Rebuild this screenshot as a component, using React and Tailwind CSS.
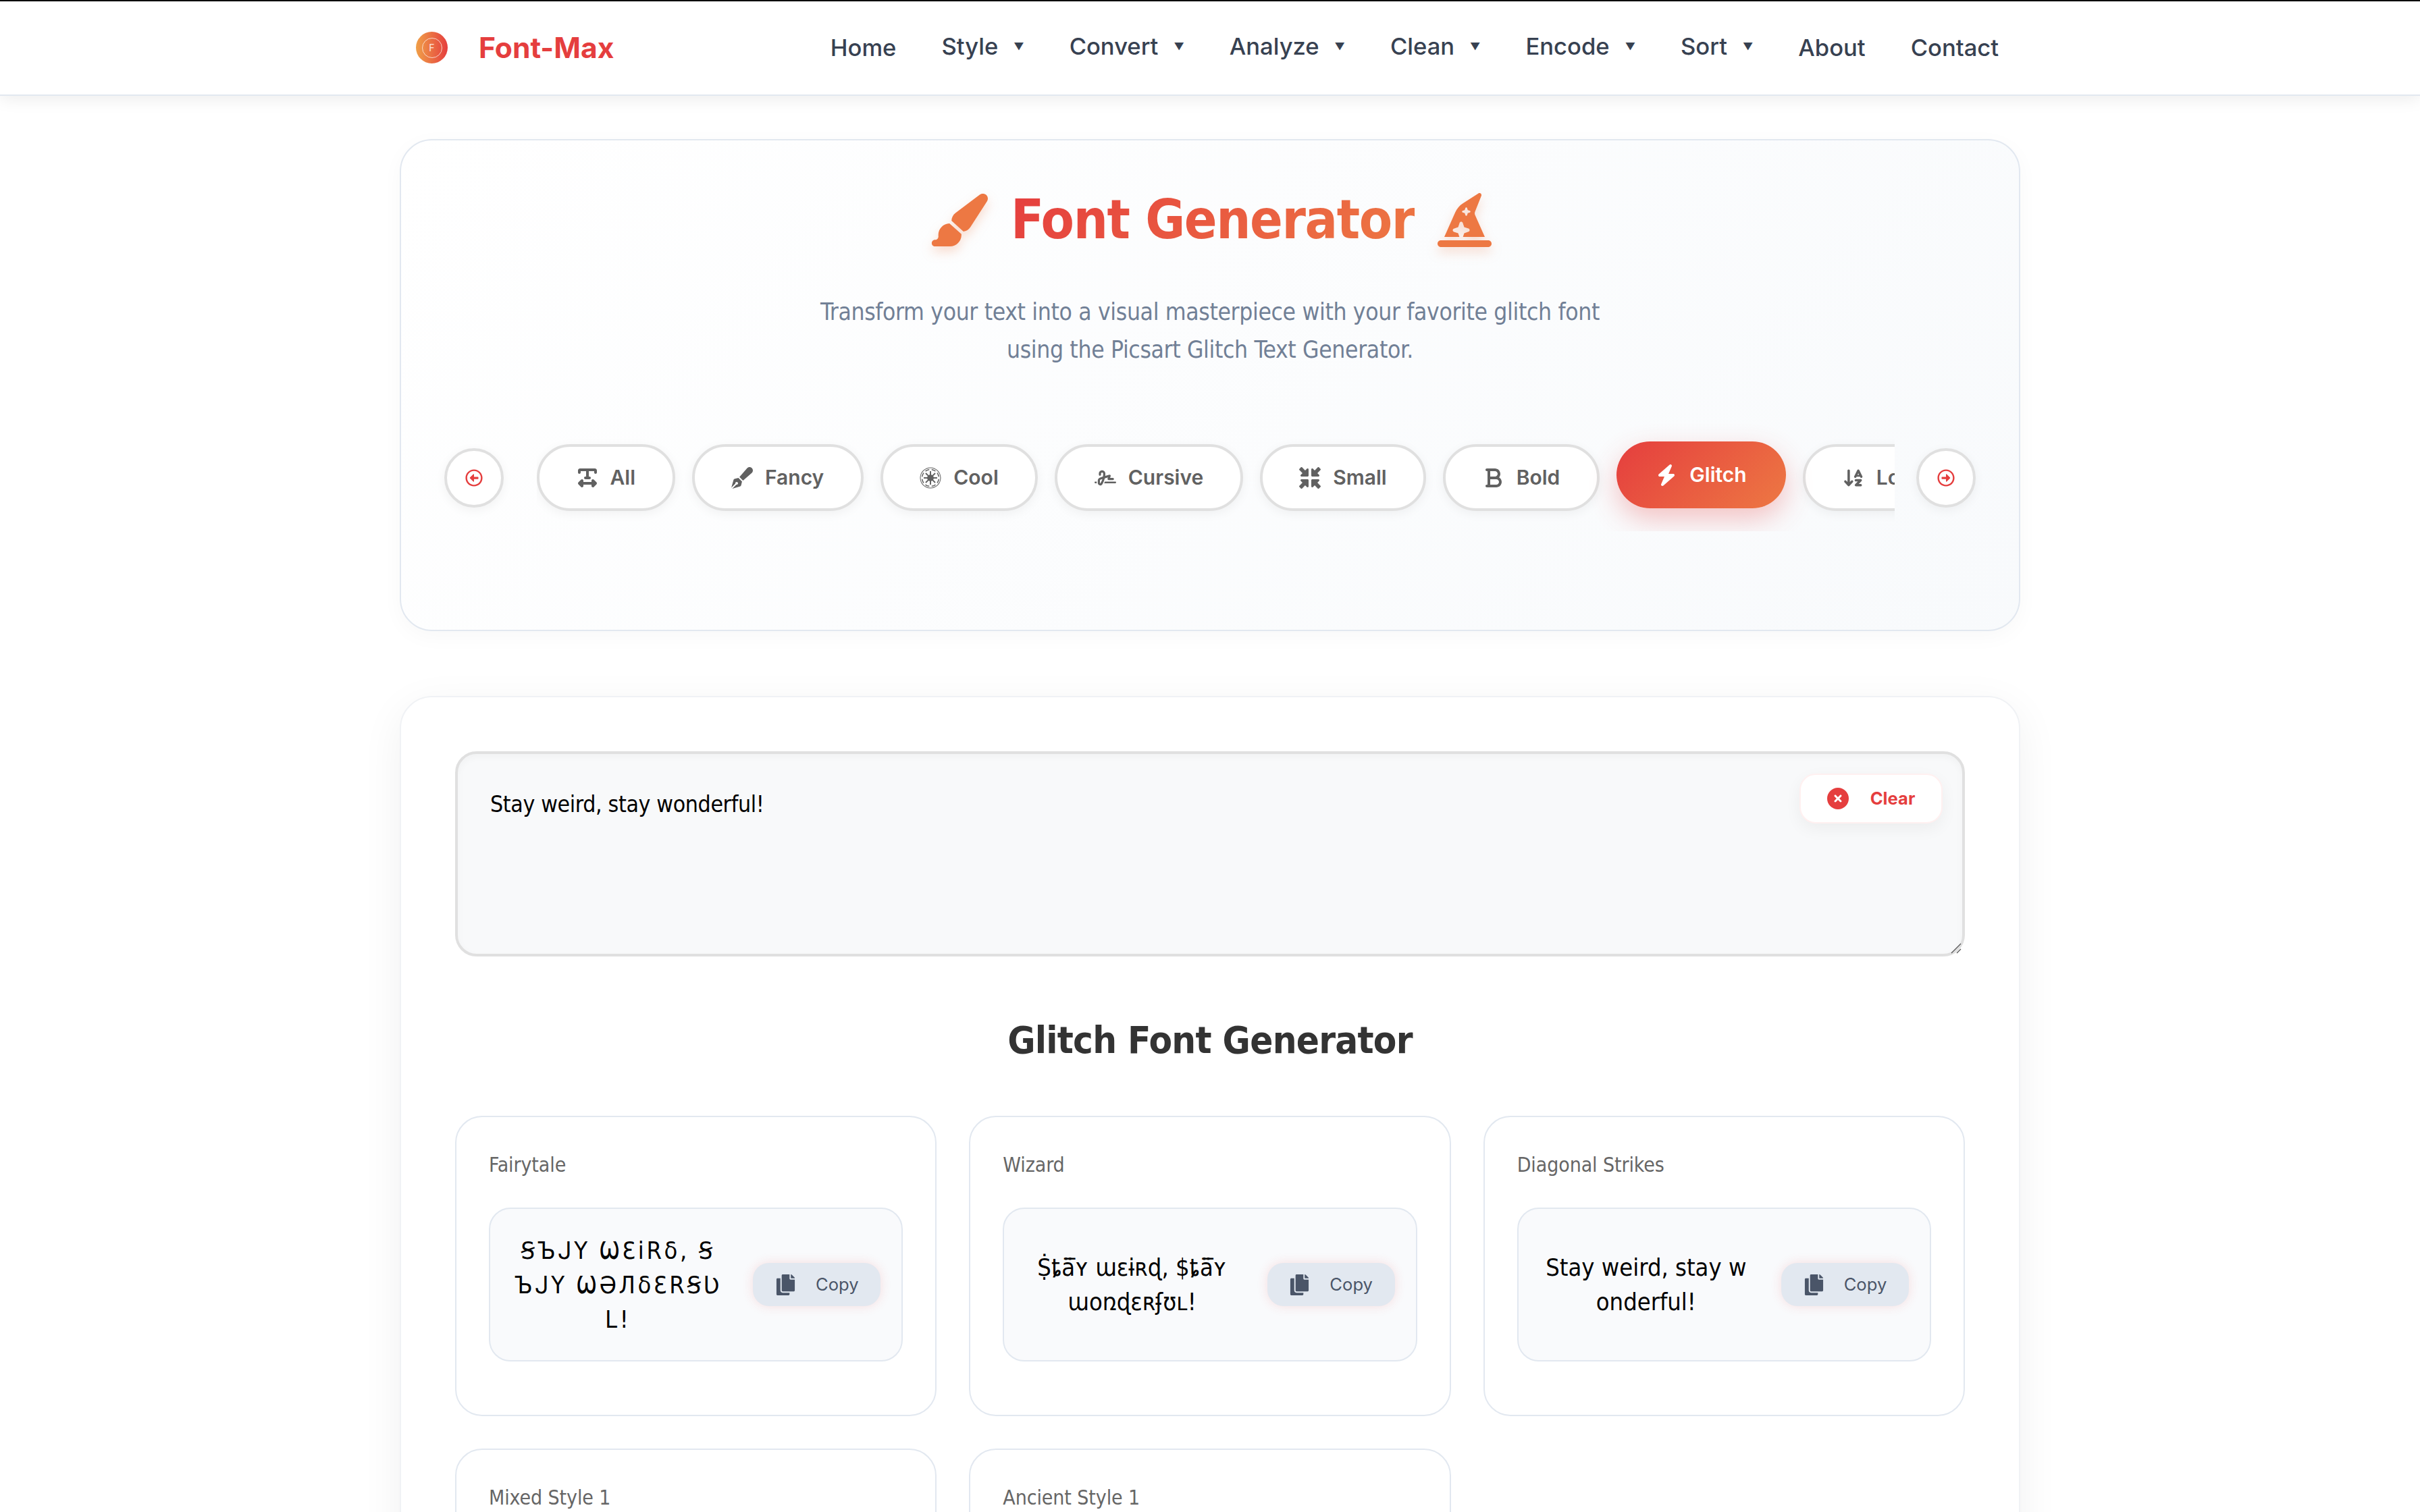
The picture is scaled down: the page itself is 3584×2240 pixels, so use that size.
import React from 'react';
import { FaGalacticRepublic, FaRegArrowAltCircleLeft, FaRegArrowAltCircleRight, FaCopy } from 'react-icons/fa';
import {
  FaPaintbrush, FaHatWizard, FaTextWidth, FaPenFancy, FaSignature, FaMinimize, FaBold, FaBolt,
  FaArrowDownAZ, FaCircleXmark,
} from 'react-icons/fa6';

const tahoma = "font-['DejaVu_Sans',sans-serif] [font-stretch:condensed]";
const inter = "font-['Inter',sans-serif]";

const navItems = [
  { label: 'Home' },
  { label: 'Style', menu: true },
  { label: 'Convert', menu: true },
  { label: 'Analyze', menu: true },
  { label: 'Clean', menu: true },
  { label: 'Encode', menu: true },
  { label: 'Sort', menu: true },
  { label: 'About' },
  { label: 'Contact' },
];

const tabs = [
  { label: 'All', icon: FaTextWidth },
  { label: 'Fancy', icon: FaPenFancy },
  { label: 'Cool', icon: FaGalacticRepublic },
  { label: 'Cursive', icon: FaSignature },
  { label: 'Small', icon: FaMinimize },
  { label: 'Bold', icon: FaBold },
  { label: 'Glitch', icon: FaBolt, active: true },
  { label: 'Lowercase', icon: FaArrowDownAZ },
];

const results = [
  { name: 'Fairytale', text: 'ꞨЪᒍY ѠƐiRδ, Ꞩ\nЪᒍY ѠӘЛδƐRꞨƲ\nL!', spacing: 'tracking-[3.6px]' },
  { name: 'Wizard', text: 'Ṩȶä̅ʏ ɯɛɨʀɖ, $ȶä̅ʏ\nɯoռɖɛʀʄʊʟ!' },
  { name: 'Diagonal Strikes', text: 'Stay weird, stay wonderful!' },
  { name: 'Mixed Style 1', text: 'Stay weird, stay wonderful!' },
  { name: 'Ancient Style 1', text: 'Stay weird, stay wonderful!' },
];

const ArrowButton = ({ icon: Icon }) => (
  <button className="w-[88px] h-[88px] shrink-0 rounded-full border-4 border-[#e0e0e0] bg-white flex items-center justify-center text-[#e53e3e] shadow-[0_4px_16px_rgba(0,0,0,0.05)]">
    <Icon size={26} />
  </button>
);

const TabChip = ({ label, icon: Icon, active }) => (
  <button
    className={`h-[99px] shrink-0 rounded-full border-4 px-[54.5px] flex items-center gap-[18px] text-[30px] font-semibold ${inter} ${
      active
        ? 'border-transparent bg-[linear-gradient(135deg,#e53e3e,#ed7843)] [background-origin:border-box] text-white -translate-y-[4px] shadow-[0_16px_40px_rgba(229,62,62,0.3)]'
        : 'border-[#e0e0e0] bg-white text-[#616161] shadow-[0_4px_16px_rgba(0,0,0,0.05)]'
    }`}
  >
    <Icon className="h-[32px] w-auto" />
    <span>{label}</span>
  </button>
);

const ResultCard = ({ name, text, spacing = '' }) => (
  <div className="h-[445px] rounded-[40px] border-2 border-[#e2e8f0] bg-white px-[48px] pt-[46px]">
    <div className={`h-[50px] leading-[50px] text-[30px] tracking-[-0.1px] text-[#666666] ${tahoma}`}>{name}</div>
    <div className="mt-[38px] h-[228px] rounded-[32px] border-2 border-[#e2e8f0] bg-[#f9fafc] pl-[33px] pr-[31px] flex items-center gap-[44px]">
      <div className={`flex-1 min-w-0 text-center text-[36px] leading-[51px] break-all whitespace-pre-line text-black ${tahoma} ${spacing}`}>{text}</div>
      <button className={`w-[189px] h-[64px] shrink-0 rounded-[24px] bg-[#e2e8f0] text-[#4a5568] flex items-center justify-center gap-[29px] text-[25.6px] shadow-[0_0_16px_rgba(229,62,62,0.15)] ${inter}`}>
        <FaCopy className="h-[31px] w-auto" />
        <span>Copy</span>
      </button>
    </div>
  </div>
);

const App = () => {
  return (
    <div className="h-[2240px] overflow-hidden bg-white">
      <header className="h-[142px] border-t-2 border-t-black border-b-2 border-b-[#e2e8f0] bg-white shadow-[0_4px_24px_rgba(0,0,0,0.08)] relative">
        <div className="w-[2400px] h-full mx-auto pl-[24px] pr-[32px] flex items-center justify-between">
          <div className="flex items-center gap-[46px]">
            <div className="w-[47px] h-[47px] rounded-full bg-[linear-gradient(90deg,#f0a048,#e53e3e)] flex items-center justify-center">
              <div className={`w-[30px] h-[30px] rounded-full border-[1.5px] border-white/70 flex items-center justify-center text-[14px] text-white/80 ${inter}`}>F</div>
            </div>
            <span className={`text-[42.6px] font-bold text-[#e53e3e] ${inter}`}>Font-Max</span>
          </div>
          <nav className={`flex items-center gap-[67px] text-[34.6px] font-medium text-[#374151] ${inter}`}>
            {navItems.map((item) => (
              <div key={item.label} className={`flex items-center gap-[23px] ${item.menu ? '-translate-y-[2px]' : ''}`}>
                <span>{item.label}</span>
                {item.menu && <span className="text-[15px] leading-none">▼</span>}
              </div>
            ))}
          </nav>
        </div>
      </header>

      <main className="w-[2400px] mx-auto">
        <section className="mt-[64px] h-[729px] rounded-[48px] border-2 border-[#e2e8f0] bg-[linear-gradient(135deg,#ffffff,#f8fafc)] shadow-[0_8px_32px_rgba(0,0,0,0.03)] pt-[68px] px-[64px]">
          <div className="flex items-center justify-center h-[100px]">
            <FaPaintbrush className="h-[88px] w-auto text-[#ed7843] drop-shadow-[0_8px_8px_rgba(237,120,67,0.25)]" />
            <h1 className={`mx-[34px] text-[80px] font-bold leading-none tracking-[-1.4px] text-transparent bg-clip-text bg-[linear-gradient(135deg,#e53e3e,#ed7843)] ${tahoma}`}>Font Generator</h1>
            <FaHatWizard className="h-[80px] w-auto text-[#ed7843] drop-shadow-[0_8px_8px_rgba(237,120,67,0.25)]" />
          </div>
          <p className={`mt-[58px] text-center text-[35.2px] leading-[56px] tracking-[-0.36px] text-[#718096] ${tahoma}`}>
            Transform your text into a visual masterpiece with your favorite glitch font
            <br />
            using the Picsart Glitch Text Generator.
          </p>
          <div className="mt-[112px] flex items-center">
            <ArrowButton icon={FaRegArrowAltCircleLeft} />
            <div className="ml-[49px] mr-[32px] flex-1 min-w-0 overflow-hidden -my-[30px] py-[30px]">
              <div className="flex gap-[25px]">
                {tabs.map((tab) => (
                  <TabChip key={tab.label} {...tab} />
                ))}
              </div>
            </div>
            <ArrowButton icon={FaRegArrowAltCircleRight} />
          </div>
        </section>

        <section className="mt-[96px] rounded-[48px] border-2 border-[#f0f2f5] bg-white shadow-[0_16px_64px_rgba(0,0,0,0.06)] pt-[80px] px-[80px] pb-[80px]">
          <div className="relative">
            <textarea
              readOnly
              defaultValue="Stay weird, stay wonderful!"
              className={`block w-full h-[304px] resize-none rounded-[32px] border-4 border-[#e0e0e0] bg-[#f8f9fa] shadow-[inset_0_4px_12px_rgba(0,0,0,0.03)] pt-[50px] px-[48px] text-[33.6px] leading-[50px] tracking-[-0.36px] text-black outline-none ${tahoma}`}
            />
            <svg width="16" height="16" viewBox="0 0 16 16" className="absolute right-[5px] bottom-[4px]">
              <path d="M1 15 L15 1 M9 15 L15 9" stroke="#555555" strokeWidth="1.2" fill="none" />
            </svg>
            <button className={`absolute top-[33px] right-[33px] w-[212px] h-[74px] rounded-[24px] border-2 border-[#fff0f0] bg-white shadow-[0_8px_24px_rgba(0,0,0,0.05)] flex items-center justify-center gap-[32px] text-[25.6px] font-bold text-[#e53e3e] ${inter}`}>
              <FaCircleXmark size={32} />
              <span>Clear</span>
            </button>
          </div>
          <h2 className={`mt-[88px] h-[72px] leading-[72px] text-center text-[56px] font-bold tracking-[-0.75px] text-[#333333] ${tahoma}`}>Glitch Font Generator</h2>
          <div className="mt-[76px] grid grid-cols-3 gap-[48px]">
            {results.map((r) => (
              <ResultCard key={r.name} {...r} />
            ))}
          </div>
        </section>
      </main>
    </div>
  );
};

export default App;
